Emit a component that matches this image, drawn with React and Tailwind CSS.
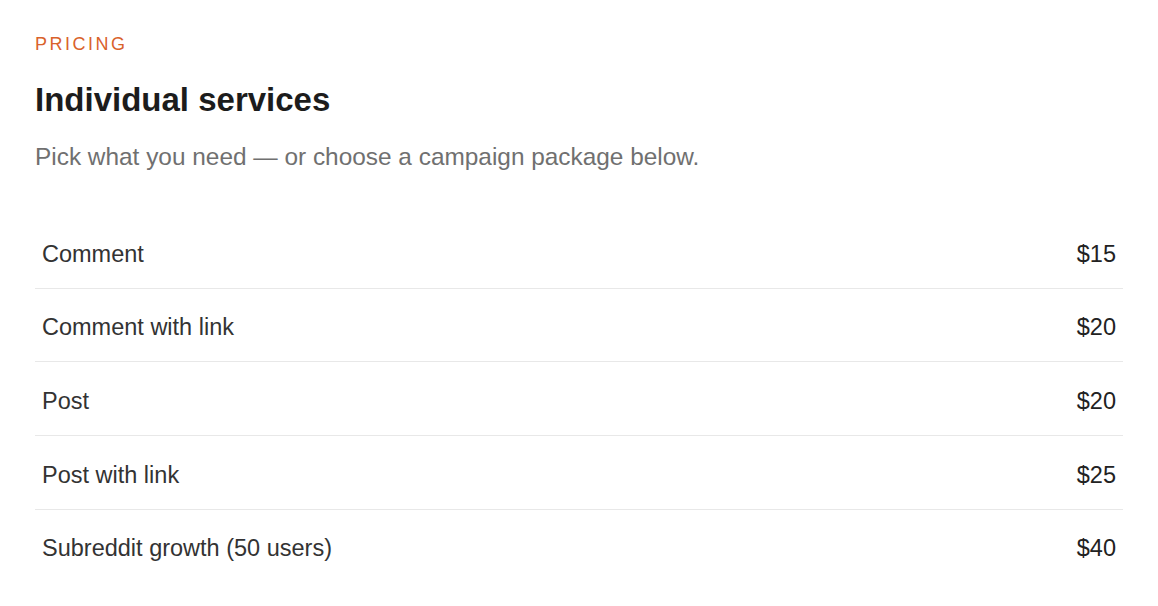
import React from "react";

const services = [
  { name: "Comment", price: "$15" },
  { name: "Comment with link", price: "$20" },
  { name: "Post", price: "$20" },
  { name: "Post with link", price: "$25" },
  { name: "Subreddit growth (50 users)", price: "$40" },
];

function ServiceRow({ name, price, last }) {
  return (
    <div
      className={
        "flex items-center justify-between px-[7px] pt-[26.5px] pb-[21.5px] " +
        (last ? "" : "border-b border-[#e8e8e8]")
      }
    >
      <span className="text-[23.5px] leading-[24.67px] text-[#333333]">{name}</span>
      <span className="text-[23.5px] leading-[24.67px] text-[#222222]">{price}</span>
    </div>
  );
}

export default function App() {
  return (
    <div className="min-h-screen bg-white font-['Liberation_Sans',Arial,sans-serif]">
      <div className="px-[35px] pt-[35px]">
        <p className="text-[18px] leading-[18px] tracking-[0.14em] text-[#d9622b]">PRICING</p>
        <h2 className="mt-[30px] text-[33px] leading-[33px] font-bold text-[#1c1c1c]">
          Individual services
        </h2>
        <p className="mt-[29px] text-[24.4px] leading-[24px] text-[#707070]">
          Pick what you need — or choose a campaign package below.
        </p>

        <div className="mt-[46px]">
          {services.map((s, i) => (
            <ServiceRow key={s.name} name={s.name} price={s.price} last={i === services.length - 1} />
          ))}
        </div>
      </div>
    </div>
  );
}
